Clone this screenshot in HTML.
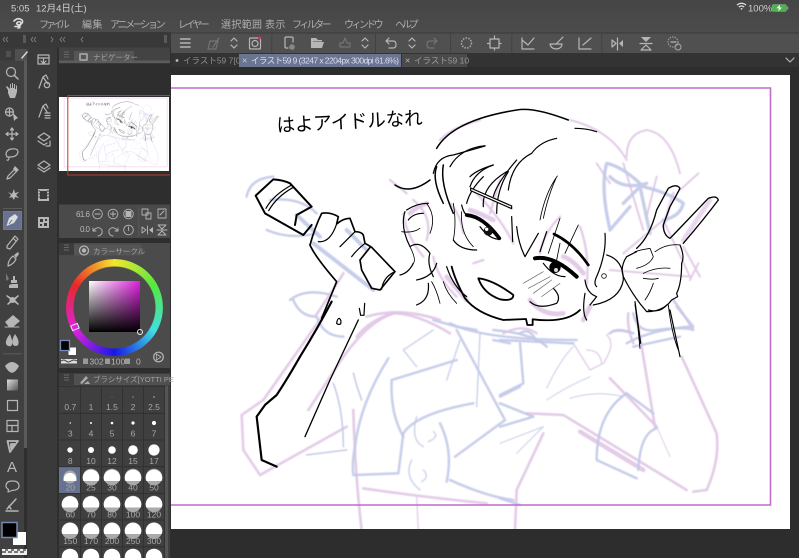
<!DOCTYPE html>
<html lang="ja"><head><meta charset="utf-8"><title>Clip Studio</title>
<style>
html,body{margin:0;padding:0;width:799px;height:558px;overflow:hidden;background:#2d2d2d}
svg{display:block;filter:blur(.35px)}
text{font-family:"Liberation Sans","Noto Sans CJK JP",sans-serif}
.ui text{fill:#b8b8b8}
.i{fill:none;stroke:#b6b6b6;stroke-width:1.2;stroke-linecap:round;stroke-linejoin:round}
.d{fill:none;stroke:#747474;stroke-width:1.2;stroke-linecap:round;stroke-linejoin:round}
.f{fill:#b6b6b6;stroke:none}
.p{fill:none;stroke:#e0c6e6;stroke-width:8;stroke-linecap:round;stroke-linejoin:round;opacity:.9}
.b{fill:none;stroke:#c2c9e8;stroke-width:7.5;stroke-linecap:round;stroke-linejoin:round;opacity:.9}
.k{fill:none;stroke:#000;stroke-width:3.6;stroke-linecap:round;stroke-linejoin:round}
.K{fill:none;stroke:#000;stroke-width:6;stroke-linecap:round;stroke-linejoin:round}
.sk{filter:blur(.5px)}
.m{font-size:10px;letter-spacing:.35px}
.ui text.m{fill:#aeaeae}
.ui text.s{font-size:8.5px;text-anchor:middle;fill:#a8a8a8}
#wheel{position:absolute;left:66px;top:259px;width:97px;height:97px;border-radius:50%;background:conic-gradient(#f5e62c 0deg,#55e840 60deg,#40e0e0 120deg,#1818e8 180deg,#e020e0 240deg,#e82828 300deg,#f5e62c 360deg);-webkit-mask:radial-gradient(circle,transparent 40.5px,#000 41.5px);mask:radial-gradient(circle,transparent 40.5px,#000 41.5px);filter:blur(.3px)}
#sq{position:absolute;left:89px;top:281px;width:51px;height:51px;background:linear-gradient(to bottom,transparent,#000),linear-gradient(to right,#fff,#e020e0)}
</style></head><body>
<svg width="799" height="558" viewBox="0 0 799 558" xmlns="http://www.w3.org/2000/svg">
<defs>
<linearGradient id="top" x1="0" y1="0" x2="0" y2="1"><stop offset="0" stop-color="#454545"/><stop offset="1" stop-color="#4c4c4c"/></linearGradient>
<linearGradient id="gr" x1="0" y1="0" x2="1" y2="1"><stop offset="0" stop-color="#e0e0e0"/><stop offset="1" stop-color="#555"/></linearGradient>
<clipPath id="thumb"><rect x="59" y="97" width="110" height="74"/></clipPath>
<clipPath id="cv"><rect x="171" y="75" width="619" height="454"/></clipPath>
<clipPath id="grid"><rect x="59" y="386" width="105" height="172"/></clipPath>
<g id="art">
 <g class="sk">
 <g transform="translate(220,300) scale(.3333)">
  <path class="p" d="M320 30L130 300L65 345L70 450L120 525L380 380"/>
  <path class="p" d="M520 40Q450 60 370 170L265 330"/>
  <path class="p" d="M410 110Q450 60 520 40Q590 40 690 100"/>
  <path class="p" d="M400 330Q405 520 425 690"/>
  <path class="p" d="M430 565Q600 590 800 610"/>
  <path class="p" style="stroke-width:4" d="M590 590L595 690"/>
  <path class="b" d="M505 175Q420 310 405 440Q395 490 400 525L535 520L550 400Q590 340 760 310"/>
  <path class="b" d="M515 240L710 180M515 240Q510 340 550 410"/>
  <path class="b" d="M710 90L855 360L705 470M690 540Q800 590 880 600M660 370Q700 450 680 545"/>
  <path class="b" style="stroke-width:4" d="M640 90L550 150L590 200M720 120L680 240M780 100L770 320"/>
  <path class="b" style="stroke-width:5" d="M260 465L380 450M340 250Q370 330 370 440M400 220Q410 260 425 300"/>
  <path class="b" style="stroke-width:4" d="M590 350Q570 420 610 440M640 395Q660 410 625 425M575 480Q550 530 600 570M610 510Q630 530 605 545"/>
  <path class="b" d="M220 0Q240 50 290 50Q310 110 370 110M640 60L710 80L770 90"/>
  <path class="b" d="M840 290L900 260M820 120L870 130"/>
 </g>
 <g transform="translate(500,300) scale(.3333)">
  <path class="p" d="M410 50L465 380M545 170L650 400Q660 480 620 570L580 575M560 570L190 345L80 340"/>
  <path class="p" style="stroke-width:13" d="M240 395L430 510"/>
  <path class="p" d="M130 400L50 570L45 690M330 235L470 380"/>
  <path class="p" style="stroke-width:3" d="M470 380L510 470"/>
  <path class="p" style="stroke-width:4" d="M320 105Q350 85 390 100M320 105Q350 130 310 190L270 210L220 130M260 150Q300 150 305 190"/>
  <path class="p" d="M385 40Q380 80 400 130M530 20L580 80"/>
  <path class="b" d="M380 280Q290 340 290 480L410 535M460 340L380 280M470 385Q420 400 415 510"/>
  <path class="b" d="M0 120L220 130M60 130L70 250L0 285M0 310L100 350L0 380"/>
  <path class="b" style="stroke-width:3" d="M210 295Q290 270 370 290M140 265Q180 180 220 140M140 300Q200 260 270 230M0 430L130 380L50 460"/>
  <path class="b" d="M380 130Q450 90 570 80M400 140L540 110M60 100Q90 80 110 125M0 595L60 615"/>
 </g>
 <g transform="translate(450,120) scale(.3333)">
  <path class="p" style="stroke-width:6" d="M530 110Q530 40 590 30Q660 40 690 160M440 130L480 190M745 160L690 210M360 0Q480 30 530 120"/>
  <path class="p" style="stroke-width:6" d="M520 130L580 330M620 170L590 290M640 300L720 470M700 380L750 470M720 480L745 430M520 400L640 300M480 450L720 470"/>
  <path class="p" style="stroke-width:14;opacity:.7" d="M780 240L700 360"/>
  <path class="p" style="stroke-width:10;opacity:.7" d="M670 220L640 320"/>
  <path class="b" style="stroke-width:10" d="M470 130Q450 200 480 330M470 130Q520 140 580 200Q660 220 700 250Q690 290 640 300M480 170Q520 210 590 190M520 250L570 200L600 340M480 330L540 260"/>
  <path class="b" d="M550 580Q560 640 620 630Q700 620 730 630Q700 580 670 540"/>
  <path class="b" d="M0 610Q100 660 380 660M130 630Q250 640 290 680M480 640Q500 620 550 640"/>
  <path class="p" style="stroke-width:7" d="M0 250Q30 280 40 340M70 430L100 420M150 180L120 280M330 290Q280 340 270 400M390 320Q420 400 410 500M160 640Q220 610 260 640"/>
  <path class="p" style="stroke-width:14" d="M340 410Q370 420 400 460M240 540Q280 590 340 580M60 270Q90 280 130 300M420 560L400 600"/>
 </g>
 <g transform="translate(240,100) scale(.3333)">
  <path class="b" d="M20 290Q30 235 100 230M80 390Q150 420 230 400M150 600Q200 560 290 590M90 300Q180 290 230 340"/>
  <path class="b" style="stroke-width:12" d="M220 430L400 570M320 390L380 450M170 345L240 410"/>
  <path class="p" d="M225 650Q280 570 310 520M380 650Q480 620 600 660"/>
  <path class="p" style="stroke-width:7" d="M600 120Q640 80 720 60M490 340Q500 410 550 470M580 470Q590 530 650 590M700 270Q780 350 820 430M450 240L500 280M520 300Q580 350 560 420"/>
  <path class="p" style="stroke-width:14" d="M510 340Q530 320 560 310M620 530L680 600"/>
 </g>
 </g>
 <g transform="translate(240,100) scale(.3333)">
  <path class="K" d="M47 287L100 238Q130 240 150 250L215 320L170 345L165 375M47 287L75 340L190 405L215 375"/>
  <path class="k" d="M78 325Q100 285 155 255M86 332Q110 290 160 262"/>
  <path class="K" style="stroke-width:5" d="M210 435Q225 380 245 340Q270 335 295 350L290 372Q310 355 330 355L345 395Q365 395 370 405L375 430L392 440L360 480L365 510L395 565L420 570L465 515L395 442"/>
  <path class="k" d="M425 568Q430 530 465 515M235 425Q270 430 290 372M300 440Q320 420 345 395M335 470Q350 450 375 430"/>
  <path class="K" style="stroke-width:5" d="M210 435Q225 470 290 545L245 655"/>
  <path class="K" style="stroke-width:4.500" d="M590 145Q640 60 830 30Q880 20 985 60"/>
  <path class="k" d="M580 220Q590 170 640 165L735 138"/>
  <path class="K" style="stroke-width:4.500" d="M465 255Q510 285 570 240M590 200Q575 240 610 310M610 195Q600 250 640 340"/>
  <path class="k" d="M690 230Q710 210 760 195M680 310Q690 270 730 230M760 290Q770 250 830 180"/>
  <path class="k" d="M495 335Q480 380 510 440Q540 420 570 460Q560 490 580 530M500 330Q530 310 565 310M505 360Q520 340 550 340M480 525Q505 520 520 490M530 540Q580 530 590 490M565 550Q570 600 530 615M620 500Q640 560 680 590M640 420Q660 450 710 450"/>
  <path class="k" style="stroke-width:2.500" d="M485 395Q520 400 540 385M510 440Q530 480 520 490M575 545Q590 570 600 610M610 545Q620 580 650 610M640 310Q650 370 640 420M665 335Q660 400 700 440M560 310Q590 350 570 400"/>
 </g>
 <g transform="translate(450,120) scale(.3333)">
  <path class="k" d="M375 25Q410 25 440 35"/>
  <path class="k" d="M0 140Q30 85 105 77M60 200Q75 155 130 135M100 260Q95 200 170 155M140 280Q140 210 175 155"/>
  <path class="K" style="stroke-width:3.500" d="M175 210Q185 130 245 100Q270 65 320 55"/>
  <path class="k" style="stroke-width:2.500" d="M270 300Q285 220 322 168M280 295Q295 225 318 175"/>
  <path d="M62 204L185 258L185 266L62 212Z" fill="#fff" stroke="#000" stroke-width="3.500"/>
  <path class="K" style="stroke-width:8" d="M312 342Q370 370 415 435"/>
  <path class="K" style="stroke-width:11" d="M50 285Q100 290 148 355"/>
  <path class="k" d="M35 255Q40 280 55 290M90 320Q115 355 145 358"/>
  <circle cx="115" cy="333" r="14" fill="#111"/><circle cx="110" cy="328" r="5" fill="#fff"/>
  <path class="K" style="stroke-width:12" d="M255 415Q310 405 380 470"/>
  <circle cx="315" cy="442" r="17" fill="#000"/><circle cx="318" cy="450" r="6" fill="#ddd"/>
  <path class="k" d="M280 430Q310 470 345 470"/>
  <path class="k" style="stroke-width:2.500" d="M320 420L330 370M295 400L330 295M345 400L385 315"/>
  <path class="k" d="M188 365L185 290M225 410Q205 370 200 320M225 410L265 340M270 395L290 335"/>
  <path class="K" style="stroke-width:5.500" d="M85 475Q130 480 190 525Q190 545 150 538Q100 520 85 475Z"/>
  <path class="K" style="stroke-width:5.500" d="M5 440Q15 480 45 535Q80 580 160 600L228 597L232 615L248 615L248 598Q350 610 390 570"/>
  <path class="k" d="M240 545Q265 570 320 550Q335 530 310 505"/>
  <path class="k" style="stroke-width:2;stroke:#666" d="M220 490L280 455M235 505L300 470M250 520L305 480M275 530L330 490"/>
  <path class="k" d="M470 405Q520 420 520 480Q510 540 430 555"/>
  <circle cx="462" cy="468" r="7" fill="#fff" stroke="#111" stroke-width="2.500"/>
  <path class="k" d="M465 340Q470 400 440 470Q430 490 440 500M405 480Q410 520 440 530L420 555M410 600Q395 580 405 520"/>
  <path class="k" style="stroke-width:4" d="M560 385Q600 350 620 270L655 205Q680 190 690 205Q680 225 660 260L640 315Q640 345 660 355L670 345L775 235Q800 225 805 240Q760 300 700 370"/>
  <path class="k" d="M690 375Q705 410 695 430Q695 490 680 520L683 530L665 540Q640 575 590 575Q550 530 520 470Q510 440 530 410L560 395"/>
  <path class="k" style="stroke-width:2.500" d="M555 395Q570 390 600 385L610 410Q600 435 560 445M615 395Q650 370 690 375M580 460Q620 440 660 445M580 475Q610 480 625 475M610 490Q600 520 585 540"/>
  <path class="k" style="stroke-width:2.800" d="M555 555Q565 620 570 685M655 555Q665 640 685 690"/>
 </g>
 <g transform="translate(220,300) scale(.3333)">
  <path class="K" style="stroke-width:6.500" d="M335 5Q290 90 240 170Q200 240 170 285L135 315L110 350L125 480L170 500"/>
  <path class="K" style="stroke-width:4" d="M415 60L330 240L255 410"/>
  <path class="k" d="M350 70Q352 55 358 55Q365 60 362 72Q354 75 350 70ZM418 25L422 46L432 46L434 10"/>
 </g>
 <g transform="translate(500,300) scale(.3333)">
  <path class="k" d="M405 5L422 130M510 30L540 170M445 30Q480 40 500 15"/>
 </g>
 <path d="M146 88H770.500V505H146Z" fill="none" stroke="#c06cc8" stroke-width="1.600"/>
</g>
</defs>

<rect width="799" height="558" fill="#2d2d2d"/>
<rect width="799" height="33" fill="url(#top)"/>
<rect y="33" width="799" height="20.500" fill="#505050"/>
<rect x="0" y="32" width="171" height="15.500" fill="#383838"/>
<rect y="32.500" x="171" width="628" height="1" fill="#3a3a3a"/>
<rect x="171" y="53" width="628" height="14" fill="#333"/>
<rect x="171" y="67" width="628" height="8" fill="#2d2d2d"/>

<rect x="171" y="75" width="619" height="454" fill="#fff"/>
<g clip-path="url(#cv)"><use href="#art"/>
 <text x="277" y="132" font-size="19" textLength="146" lengthAdjust="spacingAndGlyphs" transform="rotate(-3 277 132)" fill="#000" style="font-family:'WenQuanYi Zen Hei','Noto Sans CJK JP',sans-serif">はよアイドルなれ</text>
</g>

<g class="ui">
<text x="11" y="11.500" font-size="9.500" style="fill:#d0d0d0">5:05</text>
<text x="36" y="11.500" font-size="9.500" style="fill:#d0d0d0">12月4日(土)</text>
<path d="M737 5Q741.500 1.500 746 5M738.800 7Q741.500 5 744.200 7" fill="none" stroke="#e0e0e0" stroke-width="1.300"/><path d="M740.300 8.600L741.500 10L742.700 8.600Q741.500 7.700 740.300 8.600Z" fill="#e0e0e0"/>
<text x="748" y="11.500" font-size="9.500" style="fill:#d0d0d0">100%</text>
<rect x="772" y="4.500" width="14.500" height="7" rx="1.500" fill="#46b648" stroke="#999" stroke-width=".5"/><rect x="787" y="6.500" width="1.200" height="3" fill="#999"/>
<path d="M780 4.500L776.500 8.300H779L778 11.500L782 7.500H779.500Z" fill="#fff"/>

<path d="M14 21Q18 17 22 20Q24 23 19 25Q15 24 18 22Q21 21 21 24Q20 27 15 26.500M18 28Q20 28 20 27" fill="none" stroke="#dcdcdc" stroke-width="1.600" stroke-linecap="round"/>
<text class="m" x="39" y="28" textLength="31">ファイル</text>
<text class="m" x="82" y="28">編集</text>
<text class="m" x="110" y="28" textLength="56">アニメーション</text>
<text class="m" x="178" y="28" textLength="32">レイヤー</text>
<text class="m" x="221" y="28">選択範囲</text>
<text class="m" x="265" y="28">表示</text>
<text class="m" x="292" y="28" textLength="40">フィルター</text>
<text class="m" x="344" y="28" textLength="40">ウィンドウ</text>
<text class="m" x="395" y="28" textLength="24">ヘルプ</text>

<path class="i" style="stroke-width:1.500" d="M180.500 39H190M180.500 43H190M180.500 47H190"/>
<path class="d" d="M208 49L210 41H218L216 49ZM213 47L219 38"/>
<path class="i" d="M231 41L234 38L237 41M231 45L234 48L237 45"/>
<rect x="249.500" y="38" width="11" height="11" rx="1" class="i"/><circle cx="255" cy="43.500" r="3" class="i"/><circle cx="259.500" cy="38" r="1.500" fill="#d8375a"/>
<rect x="271.500" y="33" width=".7" height="20" fill="#3c3c3c"/>
<path class="i" d="M285 47V38Q285 37 286 37H292Q293 37 293 38V42M285 47Q285 48 286 48H288"/><circle cx="292" cy="47" r="2.800" fill="#888"/>
<path class="f" d="M311 38H316L318 40H322V48H311Z"/><rect x="313" y="41.500" width="10" height="6" fill="#505050"/><path class="f" d="M313 42H324L322 48H311Z"/>
<path class="d" d="M340 47H350V43H347L345 38L343 43H340Z"/>
<path class="i" d="M362 41L365 38L368 41M362 45L365 48L368 45"/>
<rect x="375.200" y="33" width=".7" height="20" fill="#3c3c3c"/>
<path class="i" d="M386 41H393Q396 41 396 44.500Q396 48 393 48H389M389 38L386 41L389 44"/>
<path class="i" d="M409 41L412 38L415 41M409 45L412 48L415 45"/>
<path class="d" d="M437 41H430Q427 41 427 44.500Q427 48 430 48H434M434 38L437 41L434 44"/>
<rect x="450" y="33" width=".7" height="20" fill="#3c3c3c"/>
<circle cx="466.500" cy="43" r="5" fill="none" stroke="#aaa" stroke-width="1.500" stroke-dasharray="1.500 1.300"/>
<path class="i" d="M490 39H499V48H490ZM494.500 36V39M494.500 48V50M487.500 43.500H490M499 43.500H501"/>
<rect x="511.500" y="33" width=".7" height="20" fill="#3c3c3c"/>
<path class="i" d="M522 38V49H534M522 40L528 45L534 38"/>
<path class="i" d="M550 44Q551 49 557 49Q562 48 562 44ZM556 44L563 37"/>
<path class="i" d="M579 38V49H591M583 45L591 38"/>
<rect x="601.500" y="33" width=".7" height="20" fill="#3c3c3c"/>
<path class="i" d="M612 40V47L616 43.500ZM617.500 38V50"/><path class="f" d="M623 40V47L619 43.500Z"/>
<path class="f" d="M641 37H651L646 42Z"/><path class="i" d="M641 50H651L646 45ZM640 43.500H652"/>
<circle cx="673" cy="42" r="5" fill="none" stroke="#999" stroke-width="1.200" stroke-dasharray="1.500 1"/><circle cx="678" cy="47" r="3" fill="none" stroke="#aaa"/><path class="i" d="M671 42H676"/>

<circle cx="177" cy="60.500" r="1.400" fill="#bbb"/>
<text x="183" y="63.500" font-size="8.500" style="fill:#8e8e8e">イラスト59 7[0</text>
<rect x="239" y="54" width="162" height="13" fill="#6a7591"/>
<text x="242" y="63.500" font-size="9" style="fill:#ccc">×</text>
<text x="251" y="63.500" font-size="8.500" style="fill:#dde" textLength="148">イラスト59 9 (3247 x 2204px 300dpi 61.6%)</text>
<rect x="402" y="54" width="65" height="13" fill="#4a4a4a"/>
<text x="405" y="63.500" font-size="9" style="fill:#bbb">×</text>
<text x="414" y="63.500" font-size="8.500" style="fill:#9a9a9a">イラスト59 10</text>
<path class="i" d="M786 58L790 62L794 58"/>

<rect x="0" y="47.500" width="171" height="510.500" fill="#2e2e2e"/>
<rect x="0" y="60" width="24" height="498" fill="#404040"/>
<rect x="0" y="47.500" width="27" height="13" fill="#3a3a3a"/>
<rect x="15" y="49" width="12" height="12" fill="#505050"/>
<rect x="24" y="60" width="3" height="388" fill="#5a5a5a"/>
<rect x="27" y="47.500" width="30" height="510.500" fill="#3a3a3a"/>
<rect x="23" y="35" width="3" height="8" fill="#5a5a5a"/>
<rect x="164" y="35" width="3" height="8" fill="#5a5a5a"/>
<g fill="none" stroke="#888" stroke-width=".8">
<path d="M5 37L3 39.500L5 42M8 37L6 39.500L8 42M33 37L31 39.500L33 42M36 37L34 39.500L36 42M51 37L53 39.500L51 42M62 37L60 39.500L62 42M65 37L63 39.500L65 42M83 37L81 39.500L83 42"/>
</g>
<path d="M6 52H11M6 54H11M6 56H11" stroke="#777" stroke-width=".8"/>
<path d="M21 58L27 51L28 52L22 59Z" fill="#ddd"/>

<path class="i" d="M38 55H49V64H38ZM38 58H49M43.500 59V63M41 61L43.500 63.500L46 61"/>
<path class="i" d="M39 88L43 77L48 84M43 77L46 75L48 79"/><circle cx="47" cy="85" r="2.700" class="i"/>
<path class="i" d="M39 117L43 106L47 112M43 106L46 104L48 108M45 113H50M45 115.500H50M45 118H50"/>
<path class="i" d="M38 137L44 133L50 137L44 141ZM38 141L44 145L47 143M50 141V146H46"/>
<path class="i" d="M38 165L44 161L50 165L44 169ZM38 168L44 172L50 168"/>
<rect x="38" y="189" width="11" height="12" class="f"/><path d="M40 191H47V199H40Z" fill="#3a3a3a"/><path d="M38.500 191H40M38.500 194H40M38.500 197H40M47 191H49M47 194H49M47 197H49" stroke="#3a3a3a"/>
<rect x="38" y="217" width="11" height="11" class="f"/><path d="M40 219H43V222H40ZM44 223H47V226H44ZM40 224H42V226H40ZM45 219H47V221H45Z" fill="#3a3a3a"/>

<circle cx="11" cy="72" r="4.500" class="i"/><path class="i" style="stroke-width:1.500" d="M14.500 75.500L18 79"/>
<path class="f" d="M8 93V90L6 87L7 86L10 89V84H11V88H12V83H13V88H14V84H15V89H16V85.500H17V92L15 98H10Z"/>
<circle cx="9.500" cy="112" r="4" class="i"/><path class="i" d="M6 112H13M9.500 108V116"/><path class="f" d="M13 113L18 118L16 119L14 121Z"/>
<path class="i" d="M12 128V140M6 134H18M12 128L10.500 130M12 128L13.500 130M12 140L10.500 138M12 140L13.500 138M6 134L8 132.500M6 134L8 135.500M18 134L16 132.500M18 134L16 135.500"/>
<path class="i" d="M7 157Q4 151 11 149Q18 148 18 152Q17 157 10 157ZM9 157Q9 161 7 160"/>
<path class="i" d="M8 176L15 169L17 171L10 178L7 179Z"/><path class="f" d="M13 169L15 166L19 170L16 172Z"/>
<path class="f" d="M12 194L14 189L15 193L19 192L16 195L19 198L15 197L14 200L12 197L9 198L11 195L8 192Z"/>
<rect x="3" y="208" width="19" height=".7" fill="#666"/>
<rect x="3.500" y="211.500" width="18" height="18" fill="#66728f" stroke="#7b89aa" stroke-width=".7"/>
<path style="fill:#ddd" d="M6.500 226L9 218L15 214L18 217L14 223Z"/><path d="M9 224L12 220" stroke="#66728f"/>
<path class="i" d="M7 246L15 236L18 239L10 249L7 248ZM13 238L16 241"/>
<path class="i" d="M8 266Q8 260 13 256L16 259Q14 264 8 266Z"/><path class="f" d="M14 255L18 252L19 254L16 258Z"/>
<path class="f" d="M11 280H17V283H11ZM12 284H18V288H9V285ZM13 276H15V280H13Z"/><path d="M6 273V281L9 279Z" fill="#777"/>
<path class="f" d="M7 295L13 299L18 295L19 296L15 300L19 304L18 305L13 301L8 305L7 304L11 300L6 296Z"/><circle cx="12.500" cy="300" r="3" class="f"/>
<path class="f" d="M5 322L13 315L20 321L13 327H9Z"/><path class="i" d="M5 327H19" style="stroke-width:1"/>
<path class="f" d="M10 334Q5 340 6 344Q8 347 11 346Q13 344 12 340ZM15 334Q11 340 13 345Q16 347 18 345Q20 341 15 334Z"/>
<rect x="3" y="353.500" width="19" height=".7" fill="#666"/>
<path class="f" d="M5 366Q12 358 19 366Q16 372 12 373Q8 372 5 366Z"/>
<rect x="7" y="379.500" width="11" height="11" fill="url(#gr)"/>
<rect x="7.500" y="400.500" width="10" height="10" class="i"/>
<path class="i" d="M7 420.500H18V431.500H7ZM7 425.500H18M12 425.500V431.500"/>
<path class="i" style="stroke-width:1.800" d="M7.500 441H18L10 452ZM11 444H14.500L11 448Z"/>
<text x="7" y="472" font-size="15">A</text>
<path class="i" d="M6 486Q6 481 12.500 481Q19 481 19 486Q19 490 12 490.500L8 492L8.500 489.500Q6 488 6 486Z"/>
<path class="i" style="stroke-width:1.500" d="M7 509L16 499M6 511H18M9 506L11 509"/>
<rect x="13" y="532" width="13" height="13" fill="#fff"/>
<rect x="2" y="522.500" width="15" height="15" fill="#000" stroke="#7788b0" stroke-width="1.500"/>
<rect x="2" y="549" width="25" height="6" fill="#eee"/>
<path d="M2 551H6V553H2ZM8 551H12V553H8ZM14 551H18V553H14ZM20 551H24V553H20ZM5 549H8V551H5ZM11 549H14V551H11ZM17 549H20V551H17ZM23 549H26V551H23Z" fill="#777"/>

<rect x="59" y="47.500" width="111" height="16" fill="#434343"/>
<rect x="74" y="51" width="60" height="11" fill="#555"/>
<rect x="59" y="60.500" width="111" height="2.500" fill="#5c5c5c"/>
<path d="M64 52H69M64 54.500H69M64 57H69" stroke="#777" stroke-width=".8"/>
<rect x="79" y="53" width="9" height="8" rx="1.500" fill="#999"/><rect x="81" y="55" width="5" height="4" fill="#555"/>
<text x="93" y="60" font-size="7.500" style="fill:#a2a2a2">ナビゲーター</text>
<rect x="59" y="97" width="110" height="74" fill="#fff"/>
<g clip-path="url(#thumb)"><g transform="translate(40,83.500) scale(.165)" opacity=".8"><use href="#art"/></g>
<text x="86" y="105" font-size="3" style="fill:#333">はよアイドルなれ</text></g>
<path d="M170 95.500H67.800V175H170" fill="none" stroke="#c0392b" stroke-width="1"/>

<rect x="59" y="204.500" width="111" height="33.500" fill="#4a4a4a"/>
<rect x="138.500" y="207" width=".7" height="29" fill="#5f5f5f"/>
<text x="76" y="217" font-size="8" textLength="14">61.6</text>
<text x="80" y="232" font-size="8" textLength="10">0.0</text>
<g class="i" style="stroke-width:.9">
<circle cx="97.500" cy="214" r="4.800"/><path d="M95 214H100"/>
<circle cx="113" cy="214" r="4.800"/><path d="M110.500 214H115.500M113 211.500V216.500"/>
<circle cx="128.500" cy="214" r="4.800"/><rect x="126" y="211.500" width="5" height="5" fill="#b6b6b6"/>
<path d="M142 209H148V215H142ZM146 213H151V219H146Z"/>
<path d="M158 209H166V218H158ZM160 215L164 211"/>
<path d="M93 231Q98 225 102 230Q103 235 98 236M93 228V231H96"/>
<path d="M118 231Q113 225 109 230Q108 235 113 236M118 228V231H115"/>
<circle cx="128.500" cy="230" r="4.800"/><path d="M128.500 227V230.500"/>
<path d="M142 227V233L146 230ZM147.500 226V234"/>
<path d="M158 225H166L162 229ZM158 235H166L162 231ZM157 230H167"/>
</g>
<path class="f" d="M153 227V233L149 230Z"/>

<rect x="59" y="243" width="111" height="125" fill="#4b4b4b"/>
<rect x="59" y="243" width="15" height="12" fill="#3c3c3c"/>
<rect x="74" y="244.500" width="67" height="11" fill="#555"/>
<path d="M64 245H69M64 247.500H69M64 250H69" stroke="#777" stroke-width=".8"/>
<circle cx="84" cy="250.500" r="4.500" class="i"/><circle cx="84" cy="250.500" r="2.200" class="f"/>
<text x="93" y="254" font-size="7.500" style="fill:#a2a2a2">カラーサークル</text>

<rect x="61" y="359" width="16" height="4.500" fill="#ddd"/><path d="M61 361Q64 359 66 361T71 361T77 361" stroke="#444" fill="none"/>
<rect x="83" y="358.500" width="5" height="5.500" fill="#999"/><rect x="105" y="358.500" width="5" height="5.500" fill="#999"/><rect x="125" y="358.500" width="5" height="5.500" fill="#999"/>
<text x="89.500" y="364.500" font-size="8.500">302</text>
<text x="111" y="364.500" font-size="8.500">100</text>
<text x="136" y="364.500" font-size="8.500">0</text>
<circle cx="158.500" cy="357" r="4.800" class="i"/><path class="i" d="M156.500 354L161 357L156.500 360Z" style="stroke-width:.8"/>

<rect x="59" y="373" width="111" height="12" fill="#3c3c3c"/>
<rect x="74" y="374" width="96" height="11" fill="#505050"/>
<path d="M64 375H69M64 377.500H69M64 380H69" stroke="#777" stroke-width=".8"/>
<path d="M80 383L86 376L88 378L82 384ZM84 384L88 381L90 384Z" fill="#aaa"/>
<text x="93" y="382" font-size="7.500" style="fill:#a2a2a2">ブラシサイズ[YOTTI PE</text>
<rect x="59" y="385" width="111" height="173" fill="#3f3f3f"/>
<rect x="59" y="467" width="21" height="26.500" fill="#66728f"/>
<g stroke="#2f2f2f" stroke-width=".8">
<path d="M59 386.500H165M59 413.300H165M59 440H165M59 466.700H165M59 493.400H165M59 520H165M59 546.800H165M80.500 386V558M101.500 386V558M122.500 386V558M143.500 386V558M164.500 386V558"/>
</g>
<rect x="165" y="386" width="3" height="172" fill="#555"/>
<g fill="#fff">
<circle cx="112" cy="397" r=".3"/><circle cx="133" cy="397" r=".5"/><circle cx="154" cy="397" r=".6"/>
<circle cx="70.300" cy="423" r=".7"/><circle cx="91" cy="423" r="1"/><circle cx="112" cy="423" r="1.300"/><circle cx="133" cy="423" r="1.600"/><circle cx="154" cy="423" r="2.100"/>
<circle cx="70" cy="450" r="2.700"/><circle cx="91" cy="450" r="3"/><circle cx="112" cy="450" r="3.800"/><circle cx="133" cy="450" r="4.800"/><circle cx="154" cy="450" r="5.600"/>
</g>
<g clip-path="url(#grid)">
<g fill="#aaa">
<circle cx="70" cy="477" r="6.500"/><circle cx="91" cy="477" r="8.300"/><circle cx="112" cy="477" r="8.300"/><circle cx="133" cy="477" r="8.300"/><circle cx="154" cy="477" r="8.300"/>
<circle cx="70" cy="504" r="8.300"/><circle cx="91" cy="504" r="8.300"/><circle cx="112" cy="504" r="8.300"/><circle cx="133" cy="504" r="8.300"/><circle cx="154" cy="504" r="8.300"/>
<circle cx="70" cy="530.700" r="8.300"/><circle cx="91" cy="530.700" r="8.300"/><circle cx="112" cy="530.700" r="8.300"/><circle cx="133" cy="530.700" r="8.300"/><circle cx="154" cy="530.700" r="8.300"/>
</g>
<g fill="#fff">
<path d="M63.700 481A6.500 6.500 0 1 1 76.300 481Z"/>
<path d="M83.300 481A8.300 8.300 0 1 1 98.700 481Z"/><path d="M104.300 481A8.300 8.300 0 1 1 119.700 481Z"/><path d="M125.300 481A8.300 8.300 0 1 1 140.700 481Z"/><path d="M146.300 481A8.300 8.300 0 1 1 161.700 481Z"/>
<path d="M62.300 507.500A8.300 8.300 0 1 1 77.700 507.500Z"/><path d="M83.300 507.500A8.300 8.300 0 1 1 98.700 507.500Z"/><path d="M104.300 507.500A8.300 8.300 0 1 1 119.700 507.500Z"/><path d="M125.300 507.500A8.300 8.300 0 1 1 140.700 507.500Z"/><path d="M146.300 507.500A8.300 8.300 0 1 1 161.700 507.500Z"/>
<path d="M62.300 534A8.300 8.300 0 1 1 77.700 534Z"/><path d="M83.300 534A8.300 8.300 0 1 1 98.700 534Z"/><path d="M104.300 534A8.300 8.300 0 1 1 119.700 534Z"/><path d="M125.300 534A8.300 8.300 0 1 1 140.700 534Z"/><path d="M146.300 534A8.300 8.300 0 1 1 161.700 534Z"/>
<circle cx="70" cy="557" r="8.300"/><circle cx="91" cy="557" r="8.300"/><circle cx="112" cy="557" r="8.300"/><circle cx="133" cy="557" r="8.300"/><circle cx="154" cy="557" r="8.300"/>
</g></g>
<text class="s" x="70.300" y="410">0.7</text><text class="s" x="91" y="410">1</text><text class="s" x="112" y="410">1.5</text><text class="s" x="133" y="410">2</text><text class="s" x="154" y="410">2.5</text>
<text class="s" x="70.300" y="436.500">3</text><text class="s" x="91" y="436.500">4</text><text class="s" x="112" y="436.500">5</text><text class="s" x="133" y="436.500">6</text><text class="s" x="154" y="436.500">7</text>
<text class="s" x="70.300" y="464">8</text><text class="s" x="91" y="464">10</text><text class="s" x="112" y="464">12</text><text class="s" x="133" y="464">15</text><text class="s" x="154" y="464">17</text>
<text class="s" x="70.300" y="490.500">20</text><text class="s" x="91" y="490.500">25</text><text class="s" x="112" y="490.500">30</text><text class="s" x="133" y="490.500">40</text><text class="s" x="154" y="490.500">50</text>
<text class="s" x="70.300" y="517.500">60</text><text class="s" x="91" y="517.500">70</text><text class="s" x="112" y="517.500">80</text><text class="s" x="133" y="517.500">100</text><text class="s" x="154" y="517.500">120</text>
<text class="s" x="70.300" y="544">150</text><text class="s" x="91" y="544">170</text><text class="s" x="112" y="544">200</text><text class="s" x="133" y="544">250</text><text class="s" x="154" y="544">300</text>
</g>
</svg>
<div id="wheel"></div>
<div id="sq"></div>
<svg width="799" height="558" style="position:absolute;left:0;top:0" viewBox="0 0 799 558">
<circle cx="140" cy="332" r="2.500" fill="none" stroke="#eee" stroke-width="1"/>
<rect x="71.500" y="324.500" width="7" height="5" fill="#e020e0" stroke="#eee" stroke-width="1" transform="rotate(-22 75 327)"/>
<rect x="68.500" y="347.500" width="7.500" height="7.500" fill="#fff"/>
<rect x="60.500" y="340.500" width="9" height="10" fill="#000" stroke="#7a8ab8" stroke-width="1.300"/>
</svg>
</body></html>
